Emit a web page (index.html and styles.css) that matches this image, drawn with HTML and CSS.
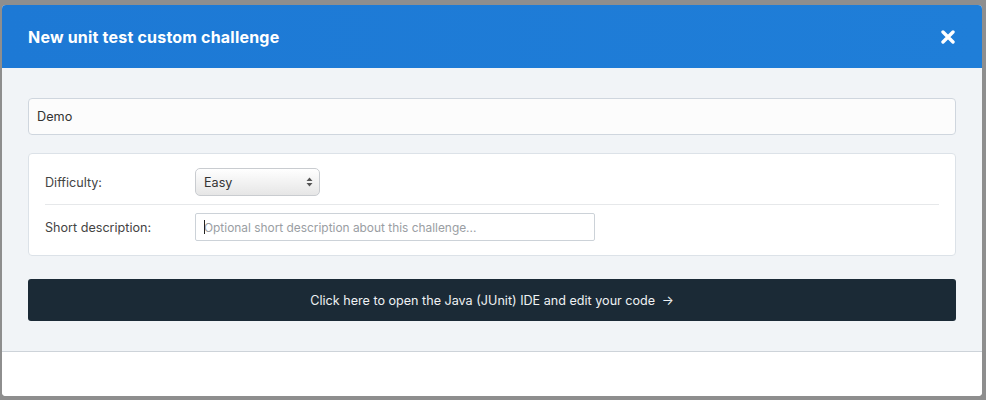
FILE: index.html
```html
<!DOCTYPE html>
<html>
<head>
<meta charset="utf-8">
<link rel="stylesheet" href="styles.css">
</head>
<body>
<div class="modal">
  <div class="modal-header">
    <h1 class="modal-title">New unit test custom challenge</h1>
    <button class="close" aria-label="Close">
      <svg width="14" height="14" viewBox="0 0 14 14"><path d="M2 2 L12 12 M12 2 L2 12" stroke="#fff" stroke-width="3.4" stroke-linecap="round"/></svg>
    </button>
  </div>
  <div class="modal-body">
    <input class="name-input" type="text" value="Demo">
    <div class="card">
      <div class="row">
        <label class="label">Difficulty:</label>
        <div class="select">
          <span>Easy</span>
          <svg class="arrows" width="7" height="10" viewBox="0 0 7 10"><path d="M3.5 0.5 L6.5 4 L0.5 4 Z M0.5 6 L6.5 6 L3.5 9.5 Z" fill="#555"/></svg>
        </div>
      </div>
      <div class="divider"></div>
      <div class="row">
        <label class="label">Short description:</label>
        <div class="desc-wrap">
          <input class="desc-input" type="text" placeholder="Optional short description about this challenge...">
          <span class="caret"></span>
        </div>
      </div>
    </div>
    <button class="ide-btn">Click here to open the Java (JUnit) IDE and edit your code <span class="arrow">→</span></button>
  </div>
  <div class="modal-footer"></div>
</div>
</body>
</html>
```
FILE: styles.css
```css
html, body {
  margin: 0;
  padding: 0;
}
body {
  background: #8e8e8e;
  width: 986px;
  height: 400px;
  overflow: hidden;
  font-family: Inter, "Noto Sans", sans-serif;
  padding: 5px 0 0 2px;
  box-sizing: border-box;
}
.modal {
  width: 980px;
  height: 391px;
  background: #fff;
  border-radius: 4px;
  overflow: hidden;
  display: flex;
  flex-direction: column;
}
.modal-header {
  height: 63px;
  background: linear-gradient(90deg, #1d79d5 0%, #1f7ed8 100%);
  display: flex;
  align-items: center;
  justify-content: space-between;
  padding: 0 27px 0 26px;
  box-sizing: border-box;
  flex: none;
}
.modal-title {
  margin: 0;
  color: #fff;
  font-size: 16px;
  font-weight: 700;
  letter-spacing: 0.2px;
}
.close {
  background: none;
  border: 0;
  padding: 0;
  width: 14px;
  height: 14px;
  display: flex;
  margin-top: 1px;
}
.modal-body {
  background: #f1f4f7;
  padding: 30px 26px 30px 26px;
  border-bottom: 1px solid #cdd3d9;
  display: flex;
  flex-direction: column;
  flex: none;
}
.name-input {
  height: 37px;
  box-sizing: border-box;
  border: 1px solid #cfd6de;
  border-radius: 4px;
  background: #fcfcfc;
  padding: 0 8px;
  font-family: inherit;
  font-size: 12.7px;
  color: #333;
  outline: none;
  margin: 0;
}
.card {
  margin-top: 18px;
  background: #fff;
  border: 1px solid #dce2e8;
  border-radius: 4px;
  padding: 14px 16px 14px 16px;
  display: flex;
  flex-direction: column;
}
.row {
  display: flex;
  align-items: center;
}
.label {
  width: 150px;
  flex: none;
  font-size: 12.6px;
  color: #444;
}
.select {
  width: 125px;
  height: 28px;
  box-sizing: border-box;
  border: 1px solid #c9ccd0;
  border-radius: 5px;
  background: linear-gradient(#ffffff, #e6e6e6);
  display: flex;
  align-items: center;
  justify-content: space-between;
  padding: 0 6px 0 8px;
  font-size: 12.6px;
  color: #333;
}
.arrows {
  display: block;
}
.divider {
  height: 1px;
  background: #e6e8ea;
  margin: 8px 0 8px 0;
}
.desc-wrap {
  position: relative;
  display: flex;
}
.desc-input {
  width: 400px;
  height: 28px;
  box-sizing: border-box;
  border: 1px solid #ccd2d8;
  border-radius: 2px;
  padding: 0 8px;
  font-family: inherit;
  font-size: 11.9px;
  color: #333;
  outline: none;
  margin: 0;
}
.desc-input::placeholder {
  color: #9a9ea3;
}
.caret {
  position: absolute;
  left: 9px;
  top: 7px;
  width: 1px;
  height: 14px;
  background: #222;
}
.ide-btn {
  margin-top: 23px;
  height: 42px;
  border: 0;
  border-radius: 3px;
  background: #1b2a36;
  color: #eef1f3;
  font-family: inherit;
  font-size: 12.6px;
  padding: 0;
}
.arrow {
  margin-left: 3px;
}
.modal-footer {
  flex: 1;
  background: #fff;
}
```
